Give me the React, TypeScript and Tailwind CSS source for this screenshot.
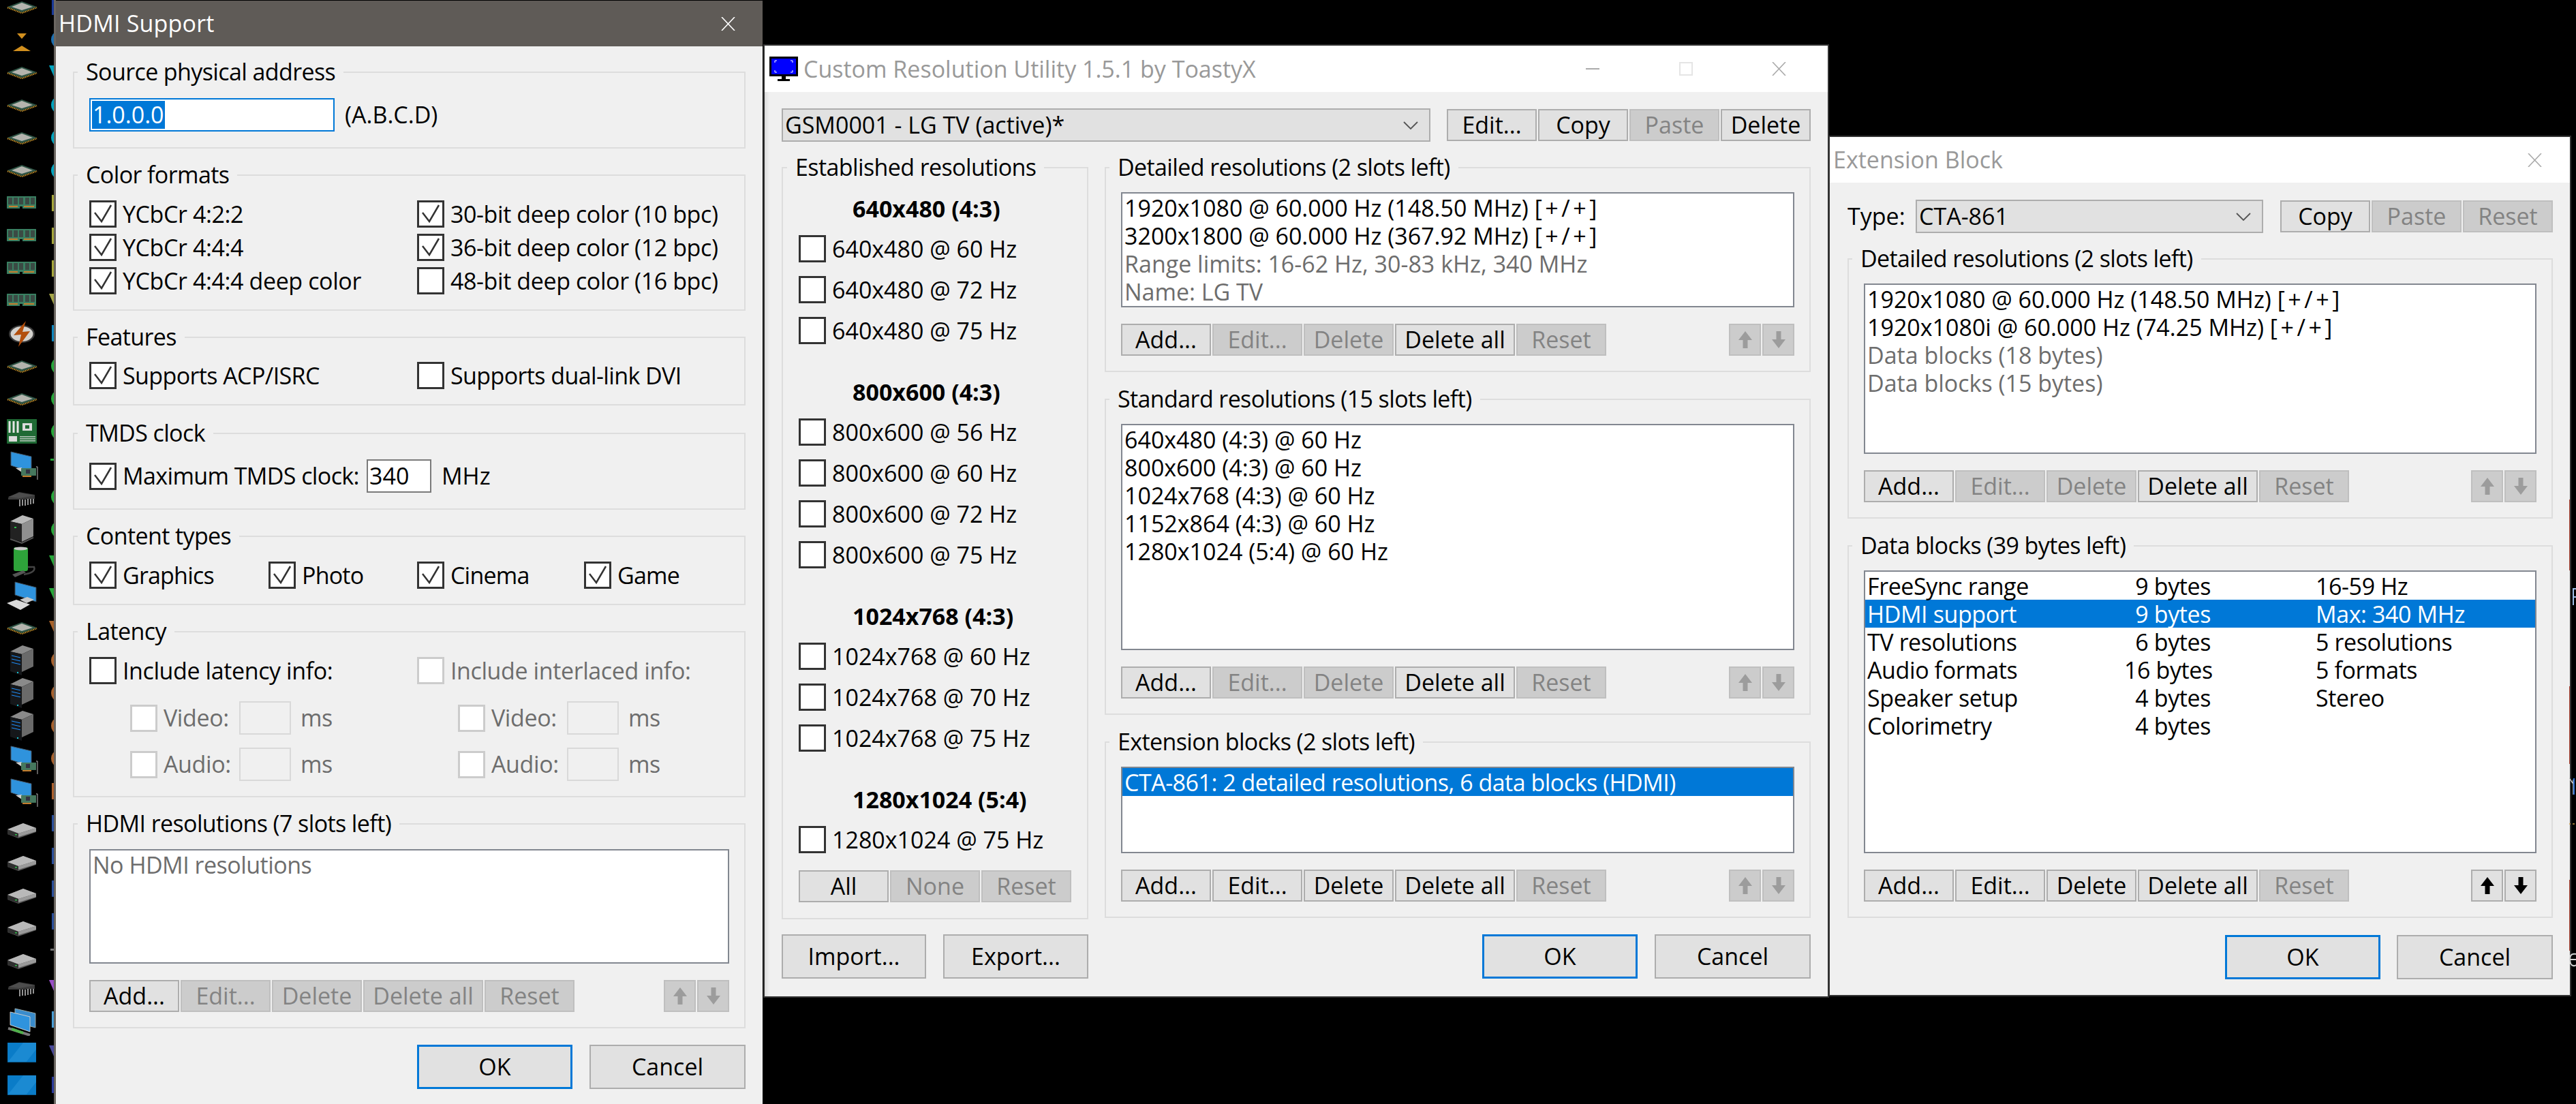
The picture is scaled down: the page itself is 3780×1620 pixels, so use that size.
import React from 'react';

type ChildProps = { children?: React.ReactNode; className?: string };

function Check() {
  return (
    <svg viewBox="0 0 34 34" className="size-[34px]">
      <path d="M5 15 L15 28 L29 4" fill="none" stroke="#333" strokeWidth="2.5" />
    </svg>
  );
}

function Checkbox({ checked, disabled }: { checked?: boolean; disabled?: boolean }) {
  return (
    <span
      className={`flex size-[40px] shrink-0 items-center justify-center border-[3px] bg-white ${
        disabled ? 'border-[#cccccc]' : 'border-[#333333]'
      }`}
    >
      {checked && <Check />}
    </span>
  );
}

function CheckRow({ label, checked, disabled }: { label: string; checked?: boolean; disabled?: boolean }) {
  return (
    <div className="flex h-[40px] items-center gap-[9px] whitespace-nowrap">
      <Checkbox checked={checked} disabled={disabled} />
      <span className={disabled ? 'text-[#6d6d6d]' : 'text-black'}>{label}</span>
    </div>
  );
}

function Btn({ children, off, className = 'w-[132px]' }: ChildProps & { off?: boolean }) {
  return (
    <div
      className={`flex h-[47px] shrink-0 items-center justify-center border-2 tracking-normal ${className} ${
        off ? 'border-[#bfbfbf] bg-[#cccccc] text-[#838383]' : 'border-[#adadad] bg-[#e1e1e1] text-black'
      }`}
    >
      {children}
    </div>
  );
}

function BigBtn({ children, primary, className }: ChildProps & { primary?: boolean }) {
  return (
    <div
      className={`flex h-[65px] shrink-0 items-center justify-center bg-[#e1e1e1] tracking-normal text-black ${className} ${
        primary ? 'border-[3px] border-[#0078d7]' : 'border-2 border-[#adadad]'
      }`}
    >
      {children}
    </div>
  );
}

function Arrow({ up, off }: { up?: boolean; off?: boolean }) {
  return (
    <div
      className={`flex h-[47px] w-[47px] items-center justify-center border-2 ${
        off ? 'border-[#bfbfbf] bg-[#cccccc]' : 'border-[#adadad] bg-[#e1e1e1]'
      }`}
    >
      <svg viewBox="0 0 20 25" className={`h-[25px] w-[20px] ${up ? '' : 'rotate-180'}`}>
        <path d="M10 0 L20 13 L13.5 13 L13.5 25 L6.5 25 L6.5 13 L0 13 Z" fill={off ? '#9c9c9c' : '#000'} />
      </svg>
    </div>
  );
}

function Chevron() {
  return (
    <svg viewBox="0 0 22 12" className="h-[12px] w-[22px]">
      <path d="M1 1 L11 11 L21 1" fill="none" stroke="#555" strokeWidth="1.8" />
    </svg>
  );
}

function Combo({ children, className }: ChildProps) {
  return (
    <div className={`flex h-[49px] shrink-0 items-center justify-between border-2 border-[#adadad] bg-[#e1e1e1] pl-[3px] pr-[16px] tracking-normal ${className}`}>
      <span>{children}</span>
      <Chevron />
    </div>
  );
}

function Group({ title, children, className = '' }: ChildProps & { title: string }) {
  return (
    <fieldset className={`min-w-0 border-2 border-[#dddddd] px-[22px] pb-[22px] pt-[16px] ${className}`}>
      <legend className="-ml-[17px] h-[41px] whitespace-nowrap px-[12px] leading-[41px] tracking-[-0.6px]">{title}</legend>
      {children}
    </fieldset>
  );
}

function ListBox({ children, className }: ChildProps) {
  return <div className={`overflow-hidden border-2 border-[#828790] bg-white ${className}`}>{children}</div>;
}

function Row({ children, gray, selected, tight }: ChildProps & { gray?: boolean; selected?: boolean; tight?: boolean }) {
  const color = selected ? 'bg-[#0078d7] text-white' : gray ? 'text-[#6d6d6d]' : 'text-black';
  return (
    <div className={`h-[41px] whitespace-nowrap pl-[3px] leading-[43px] ${tight ? 'tracking-[-0.5px]' : 'tracking-normal'} ${color}`}>
      {children}
    </div>
  );
}

function Sync() {
  return <span className="tracking-[4.5px]">[+/+]</span>;
}

function BtnRow({ enabled, arrows = false, className = '' }: { enabled: string[]; arrows?: boolean; className?: string }) {
  const names = ['Add...', 'Edit...', 'Delete', 'Delete all', 'Reset'];
  return (
    <div className={`flex gap-[2px] ${className}`}>
      {names.map((n) => (
        <Btn key={n} off={!enabled.includes(n)} className={n === 'Delete all' ? 'w-[176px]' : 'w-[132px]'}>
          {n}
        </Btn>
      ))}
      <div className="ml-auto flex gap-[2px]">
        <Arrow up off={!arrows} />
        <Arrow off={!arrows} />
      </div>
    </div>
  );
}

function TextInput({ children, className, border = 'border-[#7a7a7a]', bg = 'bg-white' }: ChildProps & { border?: string; bg?: string }) {
  return <div className={`flex h-[49px] shrink-0 items-center border-2 tracking-normal ${border} ${bg} ${className}`}>{children}</div>;
}

function DisabledSub({ label, className = '' }: { label: string; className?: string }) {
  return (
    <div className={`flex h-[49px] items-center whitespace-nowrap text-[#6d6d6d] ${className}`}>
      <Checkbox disabled />
      <span className="ml-[9px] w-[111px]">{label}</span>
      <TextInput className="w-[76px]" border="border-[#d9d9d9]" bg="bg-[#f0f0f0]" />
      <span className="ml-[14px]">ms</span>
    </div>
  );
}

function CloseGlyph({ color }: { color: string }) {
  return (
    <svg viewBox="0 0 21 20" className="h-[20px] w-[21px]">
      <path d="M1 0 L20 20 M20 0 L1 20" stroke={color} strokeWidth="1.6" />
    </svg>
  );
}

function HdmiWindow() {
  return (
    <div className="absolute left-[79px] top-0 flex h-[1620px] w-[1040px] flex-col border-l-[3px] border-[#6b6661]">
      <div className="mt-px flex h-[67px] shrink-0 items-center justify-between bg-[#5f5b57] pl-[4px] pr-[40px] tracking-[0.2px] text-white">
        <span>HDMI Support</span>
        <CloseGlyph color="#fff" />
      </div>
      <div className="flex flex-1 flex-col gap-[18px] bg-[#f0f0f0] px-[25px] pt-[17px]">
        <Group title="Source physical address">
          <div className="flex items-center pt-[1px]">
            <TextInput className="w-[360px] pl-[2px]" border="border-[#0078d7]">
              <span className="bg-[#0078d7] px-[1px] leading-[41px] text-white">1.0.0.0</span>
            </TextInput>
            <span className="ml-[15px] tracking-normal">(A.B.C.D)</span>
          </div>
        </Group>
        <Group title="Color formats">
          <div className="grid grid-cols-[481px_1fr] gap-y-[9px] pt-[1px]">
            <CheckRow label="YCbCr 4:2:2" checked />
            <CheckRow label="30-bit deep color (10 bpc)" checked />
            <CheckRow label="YCbCr 4:4:4" checked />
            <CheckRow label="36-bit deep color (12 bpc)" checked />
            <CheckRow label="YCbCr 4:4:4 deep color" checked />
            <CheckRow label="48-bit deep color (16 bpc)" />
          </div>
        </Group>
        <Group title="Features">
          <div className="grid grid-cols-[481px_1fr] tracking-[-0.6px]">
            <CheckRow label="Supports ACP/ISRC" checked />
            <CheckRow label="Supports dual-link DVI" />
          </div>
        </Group>
        <Group title="TMDS clock" className="mt-[2px]">
          <div className="flex items-center whitespace-nowrap pt-[1px]">
            <div className="w-[407px] tracking-[-0.6px]">
              <CheckRow label="Maximum TMDS clock:" checked />
            </div>
            <TextInput className="w-[95px] pl-[2px]">340</TextInput>
            <span className="ml-[15px] tracking-normal">MHz</span>
          </div>
        </Group>
        <Group title="Content types">
          <div className="grid grid-cols-[263px_218px_245px_1fr] pt-[1px] tracking-[-0.8px]">
            <CheckRow label="Graphics" checked />
            <CheckRow label="Photo" checked />
            <CheckRow label="Cinema" checked />
            <CheckRow label="Game" checked />
          </div>
        </Group>
        <Group title="Latency">
          <div className="grid grid-cols-[481px_1fr] pt-[1px]">
            <CheckRow label="Include latency info:" />
            <CheckRow label="Include interlaced info:" disabled />
          </div>
          <div className="mt-[25px] grid grid-cols-[481px_1fr] gap-y-[19px]">
            <DisabledSub label="Video:" className="pl-[60px]" />
            <DisabledSub label="Video:" className="pl-[60px]" />
            <DisabledSub label="Audio:" className="pl-[60px]" />
            <DisabledSub label="Audio:" className="pl-[60px]" />
          </div>
        </Group>
        <Group title="HDMI resolutions (7 slots left)">
          <ListBox className="mt-[1px] h-[168px]">
            <Row gray tight>No HDMI resolutions</Row>
          </ListBox>
          <BtnRow enabled={['Add...']} className="mt-[24px]" />
        </Group>
        <div className="mt-[6px] flex justify-end gap-[25px]">
          <BigBtn primary className="w-[228px]">OK</BigBtn>
          <BigBtn className="w-[229px]">Cancel</BigBtn>
        </div>
      </div>
    </div>
  );
}

function EstablishedSection({ title, rows }: { title: string; rows: string[] }) {
  return (
    <div className="tracking-normal">
      <div className="h-[41px] pl-[79px] font-bold leading-[41px]">{title}</div>
      <div className="mt-[18px] flex flex-col gap-[20px]">
        {rows.map((r) => (
          <CheckRow key={r} label={r} />
        ))}
      </div>
    </div>
  );
}

function CruWindow() {
  return (
    <div className="absolute left-[1122px] top-[67px] flex h-[1395px] w-[1560px] flex-col shadow-[0_0_0_2px_#333333]">
      <div className="flex h-[68px] shrink-0 items-center bg-white pl-[7px] pr-[3px] tracking-normal">
        <svg viewBox="0 0 42 36" className="h-[36px] w-[42px]">
          <rect width="42" height="29" fill="#000" />
          <rect x="3" y="3" width="36" height="23" fill="#0000ff" />
          <path d="M8 9 V6 H11 M31 6 H34 V9 M8 20 V23 H11 M31 23 H34 V20" fill="none" stroke="#fff" strokeWidth="1" />
          <rect x="18" y="29" width="6" height="4" fill="#000" />
          <rect x="12" y="33" width="18" height="3" fill="#000" />
        </svg>
        <span className="ml-[8px] text-[#999999]">Custom Resolution Utility 1.5.1 by ToastyX</span>
        <div className="ml-auto flex">
          <div className="flex h-[68px] w-[137px] items-center justify-center">
            <span className="h-[2px] w-[20px] bg-[#aaaaaa]" />
          </div>
          <div className="flex h-[68px] w-[137px] items-center justify-center">
            <span className="h-[20px] w-[20px] border-2 border-[#e5e5e5]" />
          </div>
          <div className="flex h-[68px] w-[137px] items-center justify-center">
            <CloseGlyph color="#aaaaaa" />
          </div>
        </div>
      </div>
      <div className="flex flex-1 flex-col bg-[#f0f0f0] px-[25px] pt-[24px] shadow-[inset_8px_0_6px_-6px_rgba(0,0,0,0.12)]">
        <div className="flex items-center">
          <Combo className="w-[952px]">GSM0001 - LG TV (active)*</Combo>
          <div className="ml-[24px] flex gap-[2px]">
            <Btn>Edit...</Btn>
            <Btn>Copy</Btn>
            <Btn off>Paste</Btn>
            <Btn>Delete</Btn>
          </div>
        </div>
        <div className="mt-[17px] flex gap-[24px]">
          <fieldset className="w-[450px] shrink-0 border-2 border-[#dddddd] px-[23px] pb-[23px] pt-[20px]">
            <legend className="-ml-[17px] h-[41px] whitespace-nowrap px-[12px] leading-[41px] tracking-[-0.6px]">Established resolutions</legend>
            <div className="flex flex-col gap-[50px]">
              <EstablishedSection title="640x480 (4:3)" rows={['640x480 @ 60 Hz', '640x480 @ 72 Hz', '640x480 @ 75 Hz']} />
              <EstablishedSection
                title="800x600 (4:3)"
                rows={['800x600 @ 56 Hz', '800x600 @ 60 Hz', '800x600 @ 72 Hz', '800x600 @ 75 Hz']}
              />
              <EstablishedSection title="1024x768 (4:3)" rows={['1024x768 @ 60 Hz', '1024x768 @ 70 Hz', '1024x768 @ 75 Hz']} />
              <EstablishedSection title="1280x1024 (5:4)" rows={['1280x1024 @ 75 Hz']} />
            </div>
            <div className="mt-[25px] flex gap-[2px]">
              <Btn>All</Btn>
              <Btn off>None</Btn>
              <Btn off>Reset</Btn>
            </div>
          </fieldset>
          <div className="flex min-w-0 flex-1 flex-col gap-[19px]">
            <Group title="Detailed resolutions (2 slots left)">
              <ListBox className="h-[169px]">
                <Row>1920x1080 @ 60.000 Hz (148.50 MHz) <Sync /></Row>
                <Row>3200x1800 @ 60.000 Hz (367.92 MHz) <Sync /></Row>
                <Row gray>Range limits: 16-62 Hz, 30-83 kHz, 340 MHz</Row>
                <Row gray>Name: LG TV</Row>
              </ListBox>
              <BtnRow enabled={['Add...', 'Delete all']} className="mt-[24px]" />
            </Group>
            <Group title="Standard resolutions (15 slots left)">
              <ListBox className="h-[332px]">
                <Row>640x480 (4:3) @ 60 Hz</Row>
                <Row>800x600 (4:3) @ 60 Hz</Row>
                <Row>1024x768 (4:3) @ 60 Hz</Row>
                <Row>1152x864 (4:3) @ 60 Hz</Row>
                <Row>1280x1024 (5:4) @ 60 Hz</Row>
              </ListBox>
              <BtnRow enabled={['Add...', 'Delete all']} className="mt-[24px]" />
            </Group>
            <Group title="Extension blocks (2 slots left)">
              <ListBox className="h-[127px]">
                <Row selected tight>CTA-861: 2 detailed resolutions, 6 data blocks (HDMI)</Row>
              </ListBox>
              <BtnRow enabled={['Add...', 'Edit...', 'Delete', 'Delete all']} className="mt-[24px]" />
            </Group>
          </div>
        </div>
        <div className="mt-[22px] flex">
          <BigBtn className="w-[212px]">Import...</BigBtn>
          <BigBtn className="ml-[25px] w-[213px]">Export...</BigBtn>
          <BigBtn primary className="ml-auto w-[228px]">OK</BigBtn>
          <BigBtn className="ml-[25px] w-[229px]">Cancel</BigBtn>
        </div>
      </div>
    </div>
  );
}

const dataRows = [
  ['FreeSync range', '9 bytes', '16-59 Hz'],
  ['HDMI support', '9 bytes', 'Max: 340 MHz'],
  ['TV resolutions', '6 bytes', '5 resolutions'],
  ['Audio formats', '16 bytes', '5 formats'],
  ['Speaker setup', '4 bytes', 'Stereo'],
  ['Colorimetry', '4 bytes', ''],
];

function ExtensionWindow() {
  return (
    <div className="absolute left-[2685px] top-[201px] flex h-[1259px] w-[1086px] flex-col shadow-[0_0_0_2px_#333333]">
      <div className="flex h-[67px] shrink-0 items-center justify-between bg-white pl-[5px] pr-[41px] tracking-normal text-[#999999]">
        <span>Extension Block</span>
        <CloseGlyph color="#aaaaaa" />
      </div>
      <div className="flex flex-1 flex-col bg-[#f0f0f0] pl-[26px] pr-[25px] pt-[24px]">
        <div className="flex items-center">
          <span className="w-[100px] shrink-0 tracking-normal">Type:</span>
          <Combo className="w-[510px]">CTA-861</Combo>
          <div className="ml-[25px] flex gap-[2px]">
            <Btn>Copy</Btn>
            <Btn off>Paste</Btn>
            <Btn off>Reset</Btn>
          </div>
        </div>
        <Group title="Detailed resolutions (2 slots left)" className="mt-[16px]">
          <ListBox className="h-[250px]">
            <Row>1920x1080 @ 60.000 Hz (148.50 MHz) <Sync /></Row>
            <Row>1920x1080i @ 60.000 Hz (74.25 MHz) <Sync /></Row>
            <Row gray>Data blocks (18 bytes)</Row>
            <Row gray>Data blocks (15 bytes)</Row>
          </ListBox>
          <BtnRow enabled={['Add...', 'Delete all']} className="mt-[24px]" />
        </Group>
        <Group title="Data blocks (39 bytes left)" className="mt-[19px]">
          <ListBox className="h-[415px]">
            {dataRows.map(([name, size, info]) => (
              <div
                key={name}
                className={`grid h-[41px] grid-cols-[380px_127px_1fr] whitespace-nowrap leading-[43px] ${
                  name === 'HDMI support' ? 'bg-[#0078d7] text-white' : 'text-black'
                }`}
              >
                <span className="pl-[3px]">{name}</span>
                <span className="text-right">{size}</span>
                <span className="pl-[154px]">{info}</span>
              </div>
            ))}
          </ListBox>
          <BtnRow enabled={['Add...', 'Edit...', 'Delete', 'Delete all']} arrows className="mt-[24px]" />
        </Group>
        <div className="mt-[25px] flex justify-end gap-[24px]">
          <BigBtn primary className="w-[228px]">OK</BigBtn>
          <BigBtn className="w-[229px]">Cancel</BigBtn>
        </div>
      </div>
    </div>
  );
}

type IconKind = 'chip' | 'arrows' | 'ram' | 'bolt' | 'board' | 'gpu' | 'ic' | 'server' | 'battery' | 'pc' | 'rack' | 'drive' | 'dual' | 'tablet';

function IconShapes({ kind }: { kind: IconKind }) {
  switch (kind) {
    case 'chip':
      return (
        <>
          <path d="M11 25 L32 33 L54 25" fill="none" stroke="#c8922a" strokeWidth="2.5" strokeDasharray="1.5 1" />
          <path d="M11 24 L32 16 L54 24 L32 32 Z" fill="#2f5546" />
          <path d="M17 24 L32 18 L48 24 L32 29 Z" fill="#b4b4ae" />
        </>
      );
    case 'arrows':
      return (
        <>
          <path d="M25 15 H39 L32 23 Z" fill="#d18f1e" />
          <path d="M32 33 L45 41 H19 Z" fill="#d18f1e" />
        </>
      );
    case 'ram':
      return (
        <>
          <rect x="10" y="14" width="43" height="18" fill="#3a8062" />
          <rect x="12" y="16" width="6" height="10" fill="#3b4a44" />
          <rect x="20" y="16" width="6" height="10" fill="#3b4a44" />
          <rect x="28" y="16" width="6" height="10" fill="#3b4a44" />
          <rect x="37" y="16" width="6" height="10" fill="#3b4a44" />
          <rect x="45" y="16" width="6" height="10" fill="#3b4a44" />
          <rect x="13" y="28" width="13" height="2" fill="#c87f2e" />
          <rect x="35" y="28" width="15" height="2" fill="#c87f2e" />
          <rect x="29" y="29" width="4" height="3" fill="#000" />
        </>
      );
    case 'bolt':
      return (
        <>
          <ellipse cx="32" cy="25" rx="19" ry="13" fill="#3c3c3c" />
          <ellipse cx="32" cy="25" rx="16.5" ry="11" fill="#d4d2ce" />
          <path d="M38 6 L20 27 L31 26 L27 44 L44 21 L33 22 Z" fill="#b34f0d" />
        </>
      );
    case 'board':
      return (
        <>
          <rect x="10" y="6" width="44" height="36" fill="#1f6a34" />
          <path d="M14 9 V26 M20 9 V26 M26 9 V26" stroke="#e5e5e5" strokeWidth="3" />
          <rect x="33" y="12" width="14" height="11" fill="#dcdcdc" />
          <rect x="37" y="15" width="6" height="5" fill="#1f6a34" />
          <rect x="13" y="31" width="12" height="8" fill="#dcdcdc" />
          <path d="M29 32 H52 M29 35 H52 M29 38 H52" stroke="#dcdcdc" strokeWidth="1.3" />
        </>
      );
    case 'gpu':
      return (
        <>
          <path d="M16 6 L46 13 V36 L16 26 Z" fill="#2f93dd" stroke="#44576a" strokeWidth="1" />
          <path d="M23 30 L32 29 V36 Z" fill="#cfcfcf" />
          <rect x="31" y="30" width="22" height="11" fill="#46785e" />
          <rect x="38" y="32" width="6" height="6" fill="#334" />
          <rect x="33" y="41" width="13" height="2" fill="#c87f2e" />
          <path d="M53 28 H55 V47" fill="none" stroke="#bbb" strokeWidth="1" />
        </>
      );
    case 'ic':
      return (
        <>
          <path d="M12 25 L28 17 L51 21 V27 L28 28 L12 28 Z" fill="#3c3c3c" />
          <path d="M12 24 L28 18 L51 22 L28 26 Z" fill="#4d4d4d" />
          <path d="M29 28 V38 M33 28 V37 M37 28 V37 M41 27 V36 M45 27 V35 M49 27 V34" stroke="#c4c4c4" strokeWidth="1.5" />
        </>
      );
    case 'server':
      return (
        <>
          <path d="M15 12 L33 3 L49 8 L32 16 Z" fill="#b9b9b9" />
          <path d="M32 16 L49 8 V34 L32 42 Z" fill="#8f8f8f" />
          <path d="M15 12 L32 16 V42 L15 37 Z" fill="#222" />
          <rect x="21" y="20" width="3" height="2" fill="#2fbf4a" />
          <path d="M15 38 L32 44 L49 36" fill="none" stroke="#555" strokeWidth="2" />
        </>
      );
    case 'battery':
      return (
        <>
          <path d="M35 42 C48 40 52 36 50 31 H41" fill="none" stroke="#444" strokeWidth="2.5" />
          <rect x="20" y="2" width="21" height="35" rx="3" fill="#2ea43a" />
          <ellipse cx="30.5" cy="4" rx="10" ry="2.5" fill="#c9c9c9" />
          <path d="M18 42 L34 36 L38 39 L22 46 Z" fill="#555" />
        </>
      );
    case 'pc':
      return (
        <>
          <path d="M22 5 L53 13 V34 L22 24 Z" fill="#2f93dd" stroke="#3d4b57" strokeWidth="1" />
          <path d="M29 31 L40 27 L50 31 L39 36 Z" fill="#c9c9c9" />
          <path d="M10 36 L24 31 L44 38 L30 46 Z" fill="#d9d9d9" />
        </>
      );
    case 'rack':
      return (
        <>
          <path d="M15 11 L33 2 L49 7 L32 15 Z" fill="#8a8a8a" />
          <path d="M32 15 L49 7 V33 L32 41 Z" fill="#6a6a6a" />
          <path d="M15 11 L32 15 V46 L15 40 Z" fill="#15171a" />
          <path d="M17 17 L30 20 M17 22 L30 25 M17 27 L30 30" stroke="#1e90ff" strokeWidth="1" />
          <rect x="25" y="41" width="2" height="2" fill="#16c7d6" />
        </>
      );
    case 'drive':
      return (
        <>
          <path d="M11 33 L34 24 L53 31 V37 L27 46 L11 40 Z" fill="#5a5a5a" />
          <path d="M11 33 L34 24 L53 31 L27 39 Z" fill="#b9b9b9" />
          <path d="M27 39 L53 31 V36 L27 44 Z" fill="#9a9a9a" />
          <path d="M11 33 L27 39 V45 L11 40 Z" fill="#2f2f2f" />
          <rect x="22" y="40" width="3" height="1.5" fill="#2fbf4a" />
        </>
      );
    case 'dual':
      return (
        <>
          <path d="M22 8 L52 15 V36 L22 28 Z" fill="#3a8ccc" stroke="#9aa" strokeWidth="1" />
          <path d="M15 13 L44 20 V42 L15 32 Z" fill="#2f93dd" stroke="#ccc" strokeWidth="1" />
          <path d="M12 37 L44 47" stroke="#7a7a7a" strokeWidth="4" />
          <path d="M17 38 L34 44" stroke="#4fb04a" strokeWidth="4" />
        </>
      );
    case 'tablet':
      return (
        <>
          <rect x="11" y="10" width="42" height="29" fill="#0a7cc8" />
          <path d="M11 39 L34 10 H53 V20 L38 39 Z" fill="#1b8ad2" />
          <rect x="11" y="38" width="42" height="1" fill="#0c5f96" />
        </>
      );
  }
}

type Sliver = { shape: 'arc' | 'bar' | 'vee' | 'dash'; color: string };

const slots: { kind: IconKind; sliver: Sliver }[] = [
  { kind: 'chip', sliver: { shape: 'bar', color: '#1a3a9a' } },
  { kind: 'arrows', sliver: { shape: 'arc', color: '#1c6fb0' } },
  { kind: 'chip', sliver: { shape: 'vee', color: '#00a5c0' } },
  { kind: 'chip', sliver: { shape: 'arc', color: '#00a5c0' } },
  { kind: 'chip', sliver: { shape: 'arc', color: '#00a5c0' } },
  { kind: 'chip', sliver: { shape: 'arc', color: '#00a5c0' } },
  { kind: 'ram', sliver: { shape: 'bar', color: '#a8a83c' } },
  { kind: 'ram', sliver: { shape: 'bar', color: '#a8a83c' } },
  { kind: 'ram', sliver: { shape: 'bar', color: '#a8a83c' } },
  { kind: 'ram', sliver: { shape: 'vee', color: '#a6a64a' } },
  { kind: 'bolt', sliver: { shape: 'bar', color: '#0e88c0' } },
  { kind: 'chip', sliver: { shape: 'arc', color: '#27a83a' } },
  { kind: 'chip', sliver: { shape: 'arc', color: '#27a83a' } },
  { kind: 'board', sliver: { shape: 'arc', color: '#27a83a' } },
  { kind: 'gpu', sliver: { shape: 'dash', color: '#27a83a' } },
  { kind: 'ic', sliver: { shape: 'arc', color: '#27a83a' } },
  { kind: 'server', sliver: { shape: 'arc', color: '#27a83a' } },
  { kind: 'battery', sliver: { shape: 'vee', color: '#27a83a' } },
  { kind: 'pc', sliver: { shape: 'vee', color: '#27a83a' } },
  { kind: 'chip', sliver: { shape: 'vee', color: '#a8622a' } },
  { kind: 'rack', sliver: { shape: 'arc', color: '#a8622e' } },
  { kind: 'rack', sliver: { shape: 'arc', color: '#a8622e' } },
  { kind: 'rack', sliver: { shape: 'arc', color: '#a8622e' } },
  { kind: 'gpu', sliver: { shape: 'arc', color: '#a8622e' } },
  { kind: 'gpu', sliver: { shape: 'bar', color: '#b0622e' } },
  { kind: 'drive', sliver: { shape: 'bar', color: '#2a4f9c' } },
  { kind: 'drive', sliver: { shape: 'bar', color: '#2a4f9c' } },
  { kind: 'drive', sliver: { shape: 'bar', color: '#2a4f9c' } },
  { kind: 'drive', sliver: { shape: 'bar', color: '#2a4f9c' } },
  { kind: 'drive', sliver: { shape: 'dash', color: '#777777' } },
  { kind: 'ic', sliver: { shape: 'vee', color: '#9a4fc8' } },
  { kind: 'dual', sliver: { shape: 'bar', color: '#4a9fd8' } },
  { kind: 'tablet', sliver: { shape: 'vee', color: '#4a4a9a' } },
  { kind: 'tablet', sliver: { shape: 'bar', color: '#2a3a9c' } },
];

function SliverShape({ shape, color }: Sliver) {
  if (shape === 'arc') return <ellipse cx="84" cy="24" rx="9" ry="11" fill={color} />;
  if (shape === 'vee') return <path d="M72 14 H79 V30 Z" fill={color} />;
  if (shape === 'dash') return <rect x="74" y="16" width="5" height="3" fill={color} />;
  return <rect x="76" y="12" width="3" height="24" fill={color} />;
}

function IconStrip() {
  return (
    <div className="absolute left-0 top-[-14px] flex w-[79px] flex-col">
      {slots.map((s, i) => (
        <svg key={i} viewBox="0 0 79 48" className="h-[47.94px] w-[79px] shrink-0">
          <IconShapes kind={s.kind} />
          <SliverShape {...s.sliver} />
        </svg>
      ))}
    </div>
  );
}

// bits of the window behind, showing past the right edge of Extension Block
function RightEdge() {
  return (
    <svg viewBox="0 0 10 1620" className="absolute left-[3770px] top-0 h-[1620px] w-[10px]">
      <path d="M0.5 733 V837 M0.5 1007 V1121 M0.5 1291 V1395" stroke="#b94a3a" strokeWidth="1" />
      <path d="M6 888 V864 H10 M7 876 H10" fill="none" stroke="#9fc0e8" strokeWidth="2" />
      <path d="M0 1142 L6 1150 M6 1166 V1144" fill="none" stroke="#cfcfcf" strokeWidth="1.5" />
      <path d="M7 1142 V1166" stroke="#2f6fd0" strokeWidth="2" />
      <path d="M0 1209 H2 M5 1209 H8" stroke="#c79a4a" strokeWidth="1.5" />
      <path d="M10 1400 C2 1398 0 1405 1 1410 C2 1418 8 1418 10 1416 M1 1408 H10" fill="none" stroke="#d5d5d5" strokeWidth="2" />
    </svg>
  );
}

export default function App() {
  return (
    <div className="relative h-[1620px] w-[3780px] overflow-hidden bg-black font-['Open_Sans',sans-serif] text-[34px] tracking-[-0.4px] text-black">
      <IconStrip />
      <HdmiWindow />
      <CruWindow />
      <ExtensionWindow />
      <RightEdge />
    </div>
  );
}
